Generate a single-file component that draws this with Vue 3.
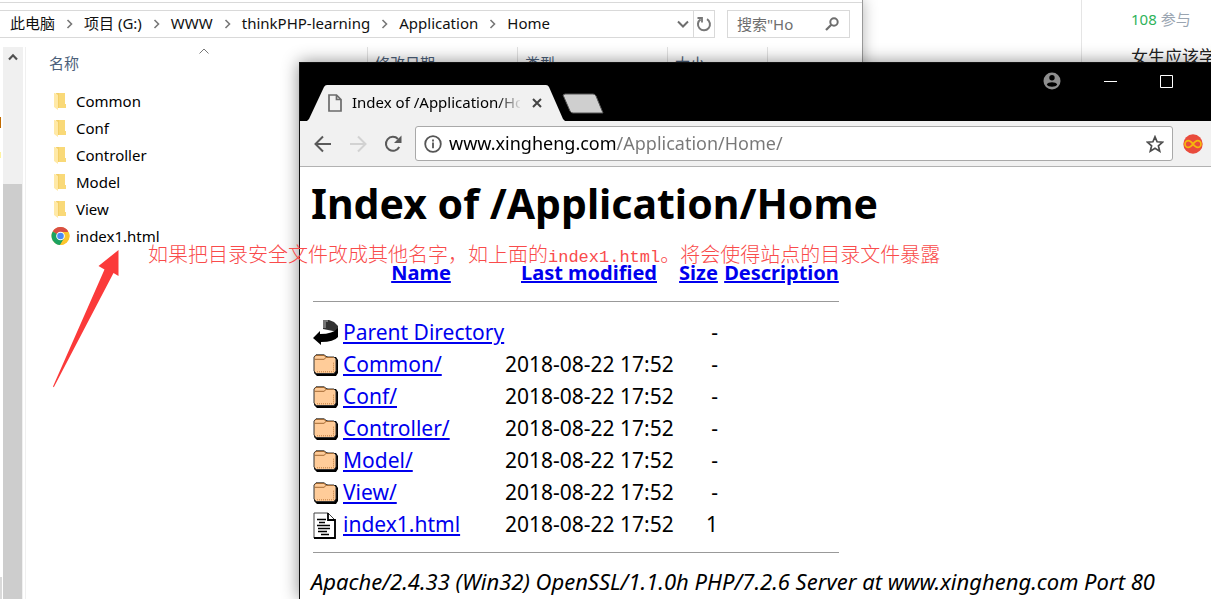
<script setup>
import { ref } from 'vue'

const crumbs = ['此电脑', '项目 (G:)', 'WWW', 'thinkPHP-learning', 'Application', 'Home']
const columns = ['修改日期', '类型', '大小', '']
const files = ['Common', 'Conf', 'Controller', 'Model', 'View']
const query = ref('搜索"Ho')
const address = ref('www.xingheng.com/Application/Home/')
const entries = [
  { icon: 'back', name: 'Parent Directory', date: '', size: '-' },
  { icon: 'folder', name: 'Common/', date: '2018-08-22 17:52', size: '-' },
  { icon: 'folder', name: 'Conf/', date: '2018-08-22 17:52', size: '-' },
  { icon: 'folder', name: 'Controller/', date: '2018-08-22 17:52', size: '-' },
  { icon: 'folder', name: 'Model/', date: '2018-08-22 17:52', size: '-' },
  { icon: 'folder', name: 'View/', date: '2018-08-22 17:52', size: '-' },
  { icon: 'text', name: 'index1.html', date: '2018-08-22 17:52', size: '1' }
]
</script>

<template>
  <div class="desktop">
    <aside class="forum">
      <p class="joined"><b>108</b> 参与</p>
      <p class="topic">女生应该学</p>
    </aside>

    <section class="explorer">
      <div class="bar">
        <nav class="path">
          <template v-for="(c, i) in crumbs" :key="c">
            <svg v-if="i" class="sep" width="7" height="10" viewBox="0 0 7 10"><path d="M1.5 1 5.5 5 1.5 9" fill="none" stroke="#777" stroke-width="1.6" /></svg>
            <a href="#">{{ c }}</a>
          </template>
          <button class="drop" aria-label="历史记录">
            <svg width="12" height="8" viewBox="0 0 12 8"><path d="M1 1.5 6 6.5 11 1.5" fill="none" stroke="#6e6e6e" stroke-width="2" /></svg>
          </button>
          <button class="refresh" aria-label="刷新">
            <svg width="16" height="16" viewBox="0 0 16 16"><path d="M11 3.2A6 6 0 1 1 4.6 3.4" fill="none" stroke="#777" stroke-width="2" /><path d="M1.5 2H6V6.5" fill="none" stroke="#777" stroke-width="1.8" /></svg>
          </button>
        </nav>
        <div class="search">
          <input v-model="query" aria-label="搜索" />
          <svg width="14" height="14" viewBox="0 0 14 14"><circle cx="9" cy="5" r="3.7" fill="none" stroke="#6e6e6e" stroke-width="2" /><path d="M6.3 7.7 1 13" stroke="#6e6e6e" stroke-width="2.2" /></svg>
        </div>
      </div>
      <div class="body">
        <div class="edge"><i class="orange"></i><i class="yellow"></i><i class="grip"></i></div>
        <div class="scroll">
          <svg width="10" height="8" viewBox="0 0 10 8"><path d="M1 6.5 5 2.3 9 6.5" fill="none" stroke="#505050" stroke-width="2.2" /></svg>
          <div class="thumb"></div>
        </div>
        <div class="files">
          <div class="heads">
            <span class="head first">名称
              <svg class="sort" width="10" height="6" viewBox="0 0 10 6"><path d="M.5 5.5 5 1 9.5 5.5" fill="none" stroke="#777" /></svg>
            </span>
            <span v-for="c in columns" :key="c" class="head">{{ c }}</span>
          </div>
          <ul>
            <li v-for="f in files" :key="f">
              <svg width="19" height="18" viewBox="0 0 19 18"><path d="M5 1h9v11h1v4H7z" fill="#f3cf68" /><path d="M8 1h6v11h1v4H8z" fill="#f9d978" /><path d="M3 1h1l3 2v15l-4-3z" fill="#ffe9a6" /></svg>
              <span>{{ f }}</span>
            </li>
            <li>
              <svg width="19" height="18" viewBox="0 0 48 48"><circle cx="24" cy="24" r="24" fill="#fbc52d" /><path d="M24 24 3.2 12A24 24 0 0 1 44.8 12z" fill="#d94f43" /><path d="M24 24 3.2 12A24 24 0 0 0 23 48L34 30z" fill="#1ba260" /><path d="M24 13H45.3A24 24 0 0 1 23 48L34 29z" fill="#fbc52d" /><circle cx="24" cy="24" r="11.5" fill="#fff" /><circle cx="24" cy="24" r="8.8" fill="#4a8af4" /></svg>
              <span>index1.html</span>
            </li>
          </ul>
        </div>
      </div>
    </section>

    <section class="browser">
      <header class="title">
        <div class="tab">
          <svg class="shape" width="258" height="36" viewBox="0 0 258 36"><path d="M0 36 2 34 17 2Q18 0 20 0H239Q241 0 242 2L256 34 258 36z" fill="#f1f1f1" /></svg>
          <div class="tabrow">
            <svg width="14" height="18" viewBox="0 0 14 18"><path d="M1 1H8.5L13 5.5V17H1zM8.5 1V5.5H13" fill="none" stroke="#6b6b6b" stroke-width="1.7" /></svg>
            <span class="caption">Index of /Application/Home</span>
            <button aria-label="关闭标签页"><svg width="10" height="10" viewBox="0 0 10 10"><path d="M1 1 9 9M9 1 1 9" stroke="#444" stroke-width="2" /></svg></button>
          </div>
        </div>
        <button class="newtab" aria-label="新标签页"><svg width="42" height="22" viewBox="0 0 42 22"><path d="M3 1H31Q33 1 34 3L41 20H11Q9 20 8 18L1 2z" fill="#cfcfcf" stroke="#555" /></svg></button>
        <div class="controls">
          <button aria-label="用户"><svg width="18" height="18" viewBox="0 0 18 18"><circle cx="9" cy="9" r="8.5" fill="#8e8e8e" /><circle cx="9" cy="5.7" r="2.7" /><path d="M3.8 12.4C5 9.6 13 9.6 14.2 12.4 13 15.4 5 15.4 3.8 12.4z" /></svg></button>
          <button aria-label="最小化"><svg width="13" height="13" viewBox="0 0 13 13"><path d="M0 6.5H13" stroke="#fff" /></svg></button>
          <button aria-label="最大化"><svg width="13" height="13" viewBox="0 0 13 13"><path d="M.5 .5H12.5V12.5H.5z" fill="none" stroke="#fff" /></svg></button>
        </div>
      </header>
      <div class="toolbar">
        <button aria-label="后退"><svg width="18" height="18" viewBox="0 0 18 18"><path d="M17 9H2M9 1.5 1.5 9 9 16.5" fill="none" stroke="#5a5a5a" stroke-width="2" /></svg></button>
        <button aria-label="前进"><svg width="18" height="18" viewBox="0 0 18 18"><path d="M1 9H16M9 1.5 16.5 9 9 16.5" fill="none" stroke="#d2d2d2" stroke-width="2" /></svg></button>
        <button aria-label="重新加载"><svg width="18" height="18" viewBox="0 0 18 18"><path d="M15.2 12A7 7 0 1 1 14 4" fill="none" stroke="#5a5a5a" stroke-width="2" /><path d="M17.5 0.5V8H10z" fill="#5a5a5a" /></svg></button>
        <div class="omni">
          <svg width="18" height="18" viewBox="0 0 18 18"><circle cx="9" cy="9" r="7.8" fill="none" stroke="#555" stroke-width="1.8" /><path d="M9 7.6V13.2M9 4.6V6.4" stroke="#555" stroke-width="1.8" /></svg>
          <input v-model="address" aria-label="地址" />
          <button aria-label="收藏"><svg width="18" height="18" viewBox="0 0 18 18"><path d="M9 1.8 11.1 6.8 16.6 7.2 12.4 10.8 13.7 16.2 9 13.3 4.3 16.2 5.6 10.8 1.4 7.2 6.9 6.8z" fill="none" stroke="#4c4c4c" stroke-width="1.7" /></svg></button>
        </div>
        <button aria-label="扩展"><svg width="20" height="20" viewBox="0 0 20 20"><circle cx="10" cy="10" r="9.7" fill="#e94b3c" /><path d="M10 10C7.5 6.8 6.5 6.6 5.4 6.6A3.4 3.4 0 0 0 5.4 13.4C6.5 13.4 7.5 13.2 10 10 12.5 6.8 13.5 6.6 14.6 6.6A3.4 3.4 0 0 1 14.6 13.4C13.5 13.4 12.5 13.2 10 10z" fill="none" stroke="#f5b80c" stroke-width="1.7" /></svg></button>
      </div>
      <main class="page">
        <h1>Index of /Application/Home</h1>
        <table>
          <colgroup><col class="c-icon" /><col class="c-name" /><col class="c-date" /><col class="c-size" /><col class="c-desc" /></colgroup>
          <thead>
            <tr>
              <th></th>
              <th><a href="#">Name</a></th>
              <th><a href="#">Last modified</a></th>
              <th><a href="#">Size</a></th>
              <th class="last"><a href="#">Description</a></th>
            </tr>
          </thead>
          <tbody>
            <tr class="rule"><td colspan="5"></td></tr>
            <tr v-for="e in entries" :key="e.name">
              <td class="icon">
                <svg v-if="e.icon === 'back'" width="26" height="26" viewBox="0 0 26 26"><path d="M10 0H16L21 2 25 6V11L20 11 10 9z" fill="#333" /><path d="M10 1H15M10 3H13M10 5H13M10 7H13" stroke="#bbb" /><path d="M25 6V17Q21 22 8 22V25L0 18 7 11V14Q20 14 25 8z" fill="#000" /></svg>
                <svg v-else-if="e.icon === 'folder'" width="26" height="22" viewBox="0 0 26 22"><path d="M4 2H13L15 3H23L25 6V19L23 22H4L1 19z" fill="#000" /><path d="M3 .8H11L14 3H21L23 5V17L21 19.5H3L1 17V3z" fill="#ffcc99" stroke="#333" /><path d="M1.5 5.3H11L13 3.5M2 2.5 3 1.5H11L13.5 3.5H20.5" fill="none" stroke="#a46a32" /><path d="M4 17.8H20.5V8" fill="none" stroke="#c07b3c" stroke-dasharray="1 1" /></svg>
                <svg v-else width="24" height="27" viewBox="0 0 24 27"><path d="M1 1H15L22 8V26H1z" fill="#fff" stroke="#444" /><path d="M15 1V8H22V26H1" fill="none" stroke="#000" stroke-width="1.8" /><path d="M4 7.5H13M6 10.5H12M4 13.5H17M5 16.5H17M5 19.5H14M8 22.5H16" stroke="#000" stroke-width="1.4" /></svg>
              </td>
              <td><a href="#">{{ e.name }}</a></td>
              <td>{{ e.date }}</td>
              <td class="num">{{ e.size }}</td>
              <td></td>
            </tr>
          </tbody>
        </table>
        <address>Apache/2.4.33 (Win32) OpenSSL/1.1.0h PHP/7.2.6 Server at www.xingheng.com Port 80</address>
      </main>
    </section>

    <svg class="arrow" width="66" height="138" viewBox="0 0 66 138"><path d="M65.5 0V26L60.5 23 .8 137.3 0 136.5 51.5 19.5 45.5 16z" fill="#fb3a3a" /></svg>
    <p class="note">如果把目录安全文件改成其他名字，如上面的<span>index1.html</span>。将会使得站点的目录文件暴露</p>
  </div>
</template>

<style>
body { margin: 0; }
</style>

<style scoped>
.desktop { position: relative; height: 100vh; overflow: hidden; background: #fff; color: #000; font: 15px/20px "Noto Sans", "Noto Sans CJK SC", sans-serif; }
p, ul, h1 { margin: 0; padding: 0; }
button { display: flex; align-items: center; justify-content: center; padding: 0; border: 0; background: none; }
input { min-width: 0; padding: 0; border: 0; outline: 0; background: none; font: inherit; }
svg { display: block; flex: none; }

.forum { position: absolute; top: 0; right: 0; bottom: 0; width: 80px; padding: 9px 0 0 49px; border-left: 1px solid #e5e5e5; white-space: nowrap; }
.joined { color: #9aa5b1; }
.joined b { font-weight: 400; color: #2fb35a; }
.topic { padding-top: 16px; font-size: 17px; line-height: 24px; color: #222; }

.explorer { position: absolute; top: 0; left: 0; right: 348px; bottom: 0; display: flex; flex-direction: column; background: #fff; border-right: 1px solid #999; box-shadow: 0 0 14px rgba(0, 0, 0, .3); }
.bar { display: flex; gap: 12px; margin-top: 2px; padding: 7px 12px 0 0; border-top: 1px solid #d9d9d9; }
.path { flex: 1; display: flex; align-items: center; height: 26px; padding-left: 10px; border: solid #d9d9d9; border-width: 1px 1px 1px 0; white-space: nowrap; }
.path a { padding-bottom: 2px; color: #111; text-decoration: none; }
.sep { margin: 0 11px; }
.drop { width: 20px; margin-left: auto; }
.refresh { width: 21px; height: 26px; border-left: 1px solid #d9d9d9; }
.search { display: flex; align-items: center; width: 102px; padding: 0 10px 0 9px; border: 1px solid #d9d9d9; }
.search input { flex: 1; color: #6e6e6e; }
.body { flex: 1; display: flex; padding-top: 9px; }
.edge { display: flex; flex-direction: column; width: 3px; }
.edge i { flex: none; width: 1px; }
.orange { height: 11px; margin-top: 70px; background: #c06a00; }
.yellow { height: 6px; margin-top: 24px; background: #fff3a0; }
.edge .grip { flex: 1; width: 2px; margin-top: 419px; background: #dadada; }
.scroll { display: flex; flex-direction: column; align-items: center; width: 20px; padding-top: 6px; box-sizing: border-box; background: #f0f0f0; }
.thumb { flex: 1; width: 19px; margin-top: 123px; align-self: flex-start; background: #cdcdcd; }
.files { flex: 1; margin-left: 2px; border-left: 1px solid #f0f0f0; }
.heads { display: grid; grid-template-columns: 341px 150px 150px 100px 1fr; height: 32px; line-height: 32px; color: #4c607a; }
.head { padding-left: 7px; border-left: 1px solid #e2e2e2; }
.first { position: relative; padding-left: 23px; border: 0; }
.sort { position: absolute; top: 1px; left: 173px; }
.files ul { padding: 8px 0 0 25px; list-style: none; }
.files li { display: flex; align-items: center; gap: 6px; height: 27px; }

.browser { position: absolute; top: 62px; left: 299px; right: 0; bottom: 0; display: flex; flex-direction: column; border: solid #111; border-width: 1px 0 0 1px; background: #fff; box-shadow: 0 0 16px rgba(0, 0, 0, .45); overflow: hidden; }
.title { flex: none; display: flex; align-items: flex-end; height: 58px; background: #000; }
.tab { position: relative; width: 258px; height: 36px; margin-left: 7px; }
.shape { position: absolute; inset: 0; }
.tabrow { position: relative; display: flex; align-items: center; height: 36px; padding: 0 23px 0 21px; }
.caption { flex: 1; margin: 0 12px 0 10px; padding-bottom: 2px; overflow: hidden; white-space: nowrap; mask-image: linear-gradient(90deg, #000 145px, transparent 170px); }
.newtab { margin: 0 0 6px -3px; }
.controls { display: flex; align-items: center; gap: 43px; align-self: flex-start; height: 36px; margin-left: auto; padding-right: 38px; }
.toolbar { flex: none; display: flex; align-items: center; height: 45px; padding: 0 8px 0 14px; gap: 17px; background: #f1f1f1; border-bottom: 1px solid #b2b2b2; }
.omni { flex: 1; display: flex; align-items: center; gap: 7px; height: 33px; margin: 0 -7px 0 -4px; padding: 0 8px; border: 1px solid #a9a9a9; border-radius: 3px; background: #fff; }
.omni input { flex: 1; height: 28px; padding-bottom: 2px; font-size: 18px; color: transparent; background: linear-gradient(90deg, #000 167px, #777 167px); background-clip: text; }
.page { flex: 1; padding: 10px 11px 0; white-space: nowrap; }
h1 { font-size: 41px; line-height: 52px; }
table { width: 526px; margin: 29px 0 0 2px; border-collapse: collapse; table-layout: fixed; font-size: 21px; line-height: 30px; border-bottom: 1px solid #999; }
.c-icon { width: 30px; }
.c-name { width: 162px; }
.c-date { width: 174px; }
.c-size { width: 45px; }
.c-desc { width: 115px; }
td { height: 32px; padding: 0; vertical-align: top; }
.icon { vertical-align: middle; }
th { height: 43px; padding: 0 6px 0 0; font-size: 20px; vertical-align: top; }
.last { padding: 0; }
thead { border-bottom: 1px solid #999; }
.rule td { height: 15px; line-height: 15px; }
tbody tr:last-child td { padding-bottom: 11px; }
.page a { color: #00e; }
.page .num { padding-right: 6px; text-align: right; }
address { padding-top: 12px; font-size: 22px; line-height: 32px; }

.arrow { position: absolute; top: 250px; left: 53px; }
.note { position: absolute; top: 241px; left: 148px; font: 300 20px/26px "Noto Sans CJK SC", sans-serif; color: #f94b4b; white-space: nowrap; }
.note span { font-family: "Liberation Mono", monospace; font-size: 17px; }
</style>
